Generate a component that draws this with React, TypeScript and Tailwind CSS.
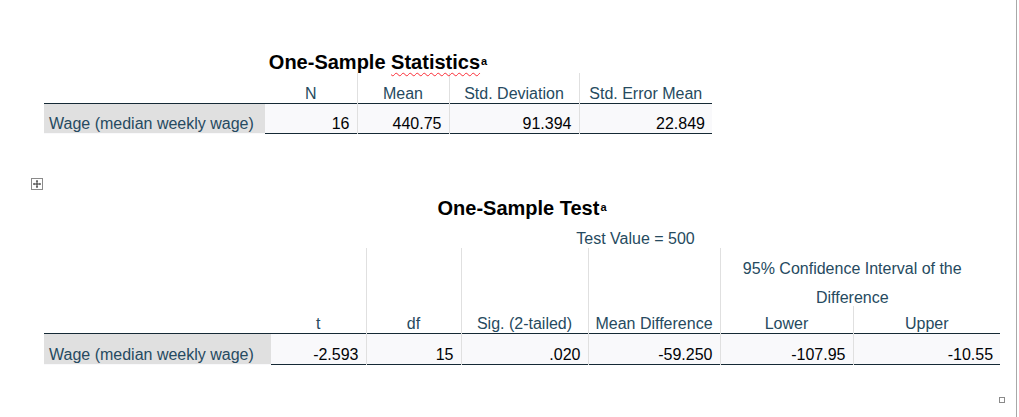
import React from "react";

const hdr = "text-[#264a60] text-[16px] leading-[18px] align-bottom text-center whitespace-nowrap p-0";
const num = "text-[#010205] text-[16px] leading-[18px] align-bottom text-right pr-[7px] bg-[#f9f9fb] border-l border-[#e0e0e0] whitespace-nowrap p-0";
const label = "text-[#264a60] text-[16px] leading-[18px] align-bottom text-left pl-[5px] bg-[#e0e0e0] whitespace-nowrap p-0 border-b border-[#f9f9fb]";

const ExpandIcon = () => (
  <svg width="12" height="12" viewBox="0 0 12 12" className="block">
    <rect x="0.5" y="0.5" width="11" height="11" fill="#fff" stroke="#8a8a8a" />
    <path d="M6 2.5v7M2.5 6h7" stroke="#333" strokeWidth="1" />
    <path d="M6 2l-1.2 1.4h2.4zM6 10l-1.2-1.4h2.4zM2 6l1.4-1.2v2.4zM10 6l-1.4-1.2v2.4z" fill="#333" />
  </svg>
);

export default function App() {
  return (
    <div
      className="w-[1017px] h-[417px] border-r border-[#a8a8a8] bg-white overflow-hidden"
      style={{ fontFamily: '"Liberation Sans", Arial, sans-serif' }}
    >
      {/* One-Sample Statistics */}
      <div className="ml-[44px] w-[668px] pt-[51px]">
        <div className="h-[22px] text-center text-[20px] leading-[22px] font-bold text-black">
          One-Sample{" "}
          <span className="underline decoration-wavy decoration-red-500 decoration-1 underline-offset-[3px]">
            Statistics
          </span>
          <span className="text-[11px] leading-[0] align-[4px] ml-[1px]">a</span>
        </div>
        <table className="table-fixed border-collapse w-[668px]">
          <colgroup>
            <col className="w-[221px]" />
            <col className="w-[92px]" />
            <col className="w-[92px]" />
            <col className="w-[130px]" />
            <col className="w-[133px]" />
          </colgroup>
          <tbody>
            <tr className="h-[30px]">
              <td className="p-0" />
              <td className={hdr}>N</td>
              <td className={`${hdr} border-l border-[#e0e0e0]`}>Mean</td>
              <td className={`${hdr} border-l border-[#e0e0e0]`}>Std. Deviation</td>
              <td className={`${hdr} border-l border-[#e0e0e0]`}>Std. Error Mean</td>
            </tr>
            <tr className="h-[30px] border-t border-b border-[#152935]">
              <td className={label}>Wage (median weekly wage)</td>
              <td className={`${num} border-l-0`}>16</td>
              <td className={num}>440.75</td>
              <td className={num}>91.394</td>
              <td className={num}>22.849</td>
            </tr>
          </tbody>
        </table>
      </div>

      {/* expand handle */}
      <div className="ml-[31px] mt-[44px]">
        <ExpandIcon />
      </div>

      {/* One-Sample Test */}
      <div className="ml-[44px] w-[956px] mt-[7px]">
        <div className="h-[22px] text-center text-[20px] leading-[22px] font-bold text-black">
          One-Sample Test
          <span className="text-[11px] leading-[0] align-[4px] ml-[1px]">a</span>
        </div>
        <table className="table-fixed border-collapse w-[956px]">
          <colgroup>
            <col className="w-[227px]" />
            <col className="w-[95px]" />
            <col className="w-[95px]" />
            <col className="w-[127px]" />
            <col className="w-[132px]" />
            <col className="w-[133px]" />
            <col className="w-[147px]" />
          </colgroup>
          <tbody>
            <tr className="h-[29px]">
              <td className="p-0" />
              <td colSpan={6} className={hdr}>
                Test Value = 500
              </td>
            </tr>
            <tr className="h-[58px]">
              <td rowSpan={2} className="p-0" />
              <td rowSpan={2} className={`${hdr} border-r border-[#e0e0e0]`}>t</td>
              <td rowSpan={2} className={`${hdr} border-r border-[#e0e0e0]`}>df</td>
              <td rowSpan={2} className={`${hdr} border-r border-[#e0e0e0]`}>Sig. (2-tailed)</td>
              <td rowSpan={2} className={`${hdr} border-r border-[#e0e0e0]`}>Mean Difference</td>
              <td colSpan={2} className="p-0 align-top text-center text-[#264a60] text-[16px]">
                <div className="leading-[29px] pt-[6px] -mb-[6px] pr-[16px]">
                  95% Confidence Interval of the
                  <br />
                  Difference
                </div>
              </td>
            </tr>
            <tr className="h-[28px]">
              <td className={`${hdr} border-r border-[#e0e0e0]`}>Lower</td>
              <td className={hdr}>Upper</td>
            </tr>
            <tr className="h-[31px] border-t border-b border-[#152935]">
              <td className={label}>Wage (median weekly wage)</td>
              <td className={`${num} border-l-0`}>-2.593</td>
              <td className={num}>15</td>
              <td className={num}>.020</td>
              <td className={num}>-59.250</td>
              <td className={num}>-107.95</td>
              <td className={num}>-10.55</td>
            </tr>
          </tbody>
        </table>
      </div>

      {/* resize handle */}
      <div className="flex justify-end pr-[11px] mt-[32px]">
        <div className="w-[6px] h-[6px] border border-[#8a8a8a]" />
      </div>
    </div>
  );
}
